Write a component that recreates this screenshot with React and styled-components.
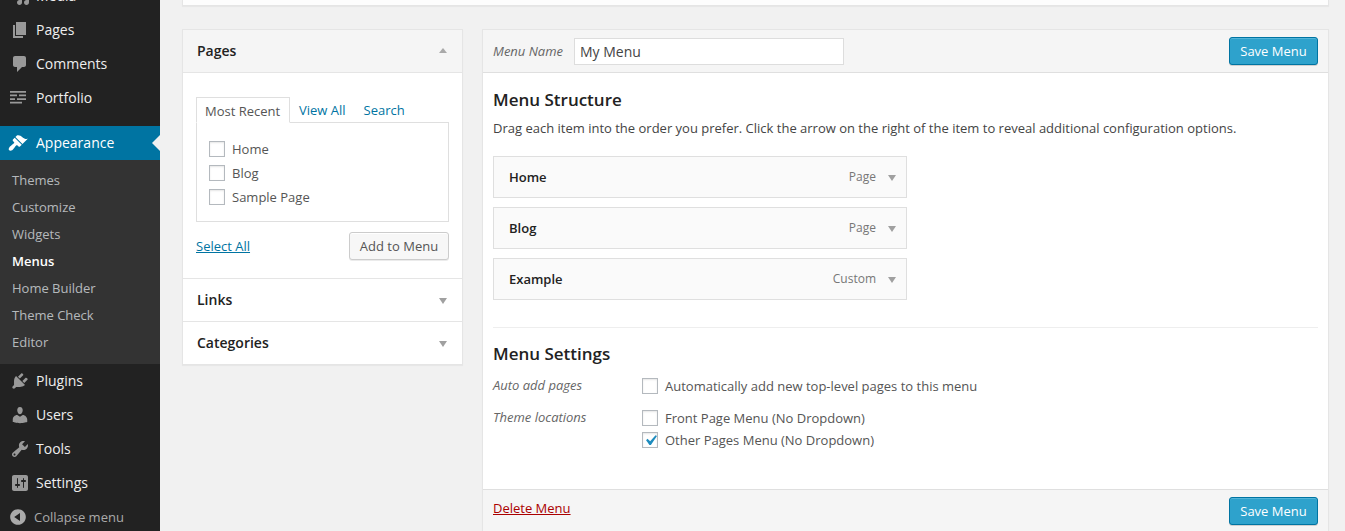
import React from "react";
import styled, { createGlobalStyle } from "styled-components";

const Global = createGlobalStyle`
  html, body { margin: 0; padding: 0; background: #f1f1f1; overflow: hidden; }
  * { box-sizing: border-box; }
  body { font-family: "Open Sans", "Liberation Sans", sans-serif; font-size: 13px; color: #444; }
`;

const Page = styled.div`
  display: flex;
  width: 1345px;
  height: 531px;
  overflow: hidden;
  background: #f1f1f1;
`;

const Sidebar = styled.nav`
  flex: 0 0 160px;
  background: #222;
  margin-top: -21px;
  height: 552px;
`;

const NavItem = styled.div`
  position: relative;
  display: flex;
  align-items: center;
  height: 34px;
  padding: 0 0 2px 10px;
  font-size: 14px;
  color: ${(p) => (p.$active ? "#fff" : "#eee")};
  background: ${(p) => (p.$active ? "#0074a2" : "transparent")};
  margin-top: ${(p) => (p.$gap ? "11px" : "0")};
  svg {
    flex: 0 0 20px;
    fill: ${(p) => (p.$active ? "#fff" : "#999")};
    margin: 2px 6px 0 ${(p) => (p.$active ? "-2px" : "0")};
  }
  ${(p) => p.$active && "span { margin-left: 2px; }"}
  ${(p) =>
    p.$active &&
    `&::after {
      content: "";
      position: absolute;
      right: 0;
      top: 9px;
      border: 8px solid transparent;
      border-right-color: #f1f1f1;
      border-left-width: 0;
    }`}
`;

const SubMenu = styled.div`
  background: #333;
  padding: 7px 0 8px;
`;

const SubItem = styled.div`
  height: 27px;
  line-height: 27px;
  padding-left: 12px;
  font-size: 13px;
  color: ${(p) => (p.$current ? "#fff" : "rgba(240,245,250,.7)")};
  font-weight: ${(p) => (p.$current ? 600 : 400)};
`;

const Collapse = styled.div`
  display: flex;
  align-items: center;
  height: 34px;
  padding-left: 8px;
  color: #aaa;
  font-size: 13px;
  svg { flex: 0 0 20px; fill: #aaa; margin-right: 6px; }
`;

const Main = styled.main`
  flex: 1;
  min-width: 0;
  padding: 0 16px 0 22px;
`;

const TopCard = styled.div`
  height: 6px;
  background: #fdfdfd;
  border: 1px solid #e5e5e5;
  border-top: 0;
  box-shadow: 0 1px 1px rgba(0, 0, 0, 0.04);
`;

const Columns = styled.div`
  display: flex;
  align-items: flex-start;
  gap: 19px;
  margin-top: 23px;
`;

const Accordion = styled.section`
  flex: 0 0 281px;
  background: #fff;
  border: 1px solid #e5e5e5;
  box-shadow: 0 1px 1px rgba(0, 0, 0, 0.04);
`;

const AccHeader = styled.h4`
  display: flex;
  align-items: center;
  justify-content: space-between;
  margin: 0;
  padding: 0 15px 2px 14px;
  font-size: 14px;
  font-weight: 600;
  color: #222;
  background: ${(p) => (p.$open ? "#f5f5f5" : "#fff")};
  border-bottom: ${(p) => (p.$last ? "0" : "1px solid #e5e5e5")};
  height: ${(p) => (p.$last ? "42px" : "43px")};
`;

const Arrow = styled.span`
  width: 0;
  height: 0;
  margin-top: ${(p) => p.$mt || 0}px;
  border-left: 4px solid transparent;
  border-right: 4px solid transparent;
  ${(p) =>
    p.$up
      ? "border-bottom: 5px solid #a9a9a9;"
      : "border-top: 6px solid #a0a0a0;"}
`;

const AccBody = styled.div`
  padding: 24px 13px 18px 13px;
  border-bottom: 1px solid #e5e5e5;
`;

const Tabs = styled.div`
  display: flex;
  height: 26px;
  position: relative;
  z-index: 1;
`;

const ActiveTab = styled.div`
  height: 26px;
  line-height: 26px;
  padding: 0 8px;
  width: 94px;
  color: #555;
  background: #fff;
  border: 1px solid #dfdfdf;
  border-bottom-color: #fff;
`;

const TabLink = styled.a`
  line-height: 27px;
  margin-left: ${(p) => p.$ml}px;
  color: #0074a2;
`;

const TabBox = styled.div`
  margin-top: -1px;
  height: 100px;
  padding: 14px 11px 0 12px;
  border: 1px solid #dfdfdf;
`;

const CheckRow = styled.label`
  display: flex;
  align-items: center;
  gap: 7px;
  height: ${(p) => p.$h || 24}px;
  color: #555;
`;

const Box = styled.span`
  position: relative;
  flex: 0 0 16px;
  width: 16px;
  height: 16px;
  background: #fff;
  border: 1px solid #b4b9be;
  box-shadow: inset 0 1px 2px rgba(0, 0, 0, 0.1);
  svg {
    position: absolute;
    left: -3px;
    top: -3px;
    width: 21px;
    height: 21px;
    fill: #1e8cbe;
  }
`;

const AccActions = styled.div`
  display: flex;
  align-items: center;
  justify-content: space-between;
  margin-top: 10px;
`;

const UnderLink = styled.a`
  color: ${(p) => p.$color || "#0074a2"};
  text-decoration: underline;
`;

const DeleteLink = styled(UnderLink)`
  margin-top: 2px;
`;

const SecondaryButton = styled.button`
  height: 28px;
  width: 100px;
  padding: 0;
  font: inherit;
  color: #555;
  background: #f7f7f7;
  border: 1px solid #ccc;
  border-radius: 3px;
  box-shadow: inset 0 1px 0 #fff, 0 1px 0 rgba(0, 0, 0, 0.08);
`;

const Editor = styled.section`
  flex: 1;
  min-width: 0;
  background: #fff;
  border: 1px solid #e5e5e5;
  box-shadow: 0 1px 1px rgba(0, 0, 0, 0.04);
`;

const EditorHeader = styled.div`
  display: flex;
  align-items: center;
  height: 43px;
  padding: 0 10px;
  background: #f5f5f5;
  border-bottom: 1px solid #dfdfdf;
`;

const NameLabel = styled.label`
  font-style: italic;
  font-size: 13px;
  color: #666;
  margin-right: 11px;
`;

const NameInput = styled.input`
  width: 270px;
  height: 27px;
  padding: 0 5px;
  font: inherit;
  font-size: 14px;
  color: #444;
  background: #fff;
  border: 1px solid #ddd;
  outline: none;
`;

const PrimaryButton = styled.button`
  margin-left: auto;
  width: 89px;
  height: 28px;
  padding: 0;
  font: inherit;
  color: #fff;
  background: #2ea2cc;
  border: 1px solid #0074a2;
  border-radius: 3px;
  box-shadow: inset 0 1px 0 rgba(120, 200, 230, 0.5), 0 1px 0 rgba(0, 0, 0, 0.15);
`;

const EditorBody = styled.div`
  padding: 15px 10px 38px;
`;

const Heading = styled.h3`
  margin: 0;
  font-size: 17px;
  line-height: 24px;
  font-weight: 600;
  color: #222;
`;

const Description = styled.p`
  margin: 7px 0 0;
  line-height: 18px;
  color: #444;
`;

const MenuList = styled.div`
  display: flex;
  flex-direction: column;
  gap: 9px;
  width: 414px;
  margin-top: 19px;
`;

const MenuItem = styled.div`
  display: flex;
  align-items: center;
  height: 42px;
  padding: 0 10px 0 15px;
  background: #fafafa;
  border: 1px solid #dfdfdf;
  b { flex: 1; font-weight: 600; color: #222; }
  span:first-of-type { font-size: 12px; color: #777; margin: 0 12px 2px 0; }
`;

const Divider = styled.hr`
  margin: 27px 0 14px;
  border: 0;
  border-top: 1px solid #eee;
`;

const SettingRow = styled.div`
  display: grid;
  grid-template-columns: 149px 1fr;
  margin-top: ${(p) => p.$mt}px;
  i { font-size: 13px; color: #666; line-height: 20px; }
`;

const Footer = styled.div`
  display: flex;
  align-items: flex-start;
  height: 60px;
  padding: 7px 10px 0;
  background: #f5f5f5;
  border-top: 1px solid #dfdfdf;
`;

const Icon = ({ children }) => (
  <svg width="20" height="20" viewBox="0 0 20 20">{children}</svg>
);

const icons = {
  Media: "M13 11V4c0-.55-.45-1-1-1h-1.67L9 1H5L3.67 3H2c-.55 0-1 .45-1 1v7c0 .55.45 1 1 1h10c.55 0 1-.45 1-1zM7 4.5c1.38 0 2.5 1.12 2.5 2.5S8.38 9.5 7 9.5 4.5 8.38 4.5 7 5.62 4.5 7 4.5zM14 6h5v10.5c0 1.38-1.12 2.5-2.5 2.5S14 17.88 14 16.5s1.12-2.5 2.5-2.5c.17 0 .34.02.5.05V9h-3V6zm-4 8.05V13h2v3.5c0 1.38-1.12 2.5-2.5 2.5S7 17.88 7 16.5 8.12 14 9.5 14c.17 0 .34.02.5.05z",
  Pages: "M6 15V2h10v13H6zm-1 1h8v2H3V5h2v11z",
  Comments: "M5 2h9c1.1 0 2 .9 2 2v7c0 1.1-.9 2-2 2h-2l-5 5v-5H5c-1.1 0-2-.9-2-2V4c0-1.1.9-2 2-2z",
  Portfolio: "M0 3h16v1.7H0zM0 6.6h7v1.7H0zM9 6.6h7v1.7H9zM0 10.2h5v1.7H0zM7 10.2h9v1.7H7zM0 13.8h12v1.7H0z",
  Appearance: "M14.48 11.06L7.41 3.99l1.5-1.5c.5-.56 2.3-.47 3.51.32 1.21.8 1.43 1.28 2.91 2.1 1.18.64 2.45 1.26 4.45.85zm-.71.71L6.7 4.7 4.93 6.47c-.39.39-.39 1.02 0 1.41l1.06 1.06c.39.39.39 1.03 0 1.42-.6.6-1.43 1.11-2.21 1.69-.35.26-.7.53-1.01.84C1.43 13.71 0 16.06 1.2 17.26c1.2 1.2 3.56-.23 4.36-1.57.31-.31.58-.66.85-1.02.57-.78 1.08-1.61 1.69-2.21.39-.39 1.02-.39 1.41 0l1.06 1.06c.39.39 1.02.39 1.41 0z",
  Plugins: "M13.11 4.36L9.87 7.6 8 5.73l3.24-3.24c.35-.34 1.05-.2 1.56.32.52.51.66 1.21.31 1.55zm-8 1.77l.91-1.12 9.01 9.01-1.19.84c-.71.71-2.63 1.16-3.82 1.16H6.14L4.9 17.26c-.59.59-1.54.59-2.12 0-.59-.58-.59-1.53 0-2.12l1.24-1.24v-3.88c0-1.13.4-3.19 1.09-3.89zm7.26 3.97l3.24-3.24c.34-.35 1.04-.21 1.55.31.52.51.66 1.21.31 1.55l-3.24 3.25z",
  Users: "M10 9.25c-2.27 0-2.73-3.44-2.73-3.44C7 4.02 7.82 2 9.97 2c2.16 0 2.98 2.02 2.71 3.81 0 0-.41 3.44-2.68 3.44zm0 2.57L12.72 10c2.39 0 4.52 2.33 4.52 4.53v2.49s-3.65 1.13-7.24 1.13c-3.65 0-7.24-1.13-7.24-1.13v-2.49c0-2.25 1.94-4.48 4.47-4.48z",
  Tools: "M16.68 9.77c-1.34 1.34-3.3 1.67-4.95.99l-5.41 6.52c-.99.99-2.59.99-3.58 0s-.99-2.59 0-3.57l6.52-5.42c-.68-1.65-.35-3.61.99-4.95 1.28-1.28 3.12-1.62 4.72-1.06l-2.89 2.89 2.82 2.82 2.86-2.87c.53 1.58.18 3.39-1.08 4.65zM3.81 16.21c.4.39 1.04.39 1.43 0 .4-.4.4-1.04 0-1.43-.39-.4-1.03-.4-1.43 0-.39.39-.39 1.03 0 1.43z",
  Settings: "M18 16V4c0-1.1-.9-2-2-2H4c-1.1 0-2 .9-2 2v12c0 1.1.9 2 2 2h12c1.1 0 2-.9 2-2zM8 11h1c.55 0 1 .45 1 1s-.45 1-1 1H8v1.5c0 .28-.22.5-.5.5s-.5-.22-.5-.5V13H6c-.55 0-1-.45-1-1s.45-1 1-1h1V5.5c0-.28.22-.5.5-.5s.5.22.5.5V11zm5-2h-1c-.55 0-1-.45-1-1s.45-1 1-1h1V5.5c0-.28.22-.5.5-.5s.5.22.5.5V7h1c.55 0 1 .45 1 1s-.45 1-1 1h-1v5.5c0 .28-.22.5-.5.5s-.5-.22-.5-.5V9z",
};

const Nav = ({ name, ...rest }) => (
  <NavItem {...rest}>
    <Icon><path d={icons[name]} /></Icon>
    <span>{name}</span>
  </NavItem>
);

const Check = ({ checked }) => (
  <Box>
    {checked && (
      <svg viewBox="0 0 20 20"><path d="M14.83 4.89l1.34.94-5.81 8.38H9.02L5.78 9.67l1.34-1.25 2.57 2.4z" /></svg>
    )}
  </Box>
);

export default function App() {
  return (
    <Page>
      <Global />
      <Sidebar>
        <Nav name="Media" />
        <Nav name="Pages" />
        <Nav name="Comments" />
        <Nav name="Portfolio" />
        <Nav name="Appearance" $active $gap />
        <SubMenu>
          {["Themes", "Customize", "Widgets", "Menus", "Home Builder", "Theme Check", "Editor"].map((s) => (
            <SubItem key={s} $current={s === "Menus"}>{s}</SubItem>
          ))}
        </SubMenu>
        <Nav name="Plugins" />
        <Nav name="Users" />
        <Nav name="Tools" />
        <Nav name="Settings" />
        <Collapse>
          <Icon><path d="M10 2.16c4.33 0 7.84 3.51 7.84 7.84s-3.51 7.84-7.84 7.84S2.16 14.33 2.16 10 5.71 2.16 10 2.16zm2 11.72V6.12L6.18 9.97z" /></Icon>
          Collapse menu
        </Collapse>
      </Sidebar>
      <Main>
        <TopCard />
        <Columns>
          <Accordion>
            <AccHeader $open>Pages<Arrow $up /></AccHeader>
            <AccBody>
              <Tabs>
                <ActiveTab>Most Recent</ActiveTab>
                <TabLink $ml={9}>View All</TabLink>
                <TabLink $ml={18}>Search</TabLink>
              </Tabs>
              <TabBox>
                <CheckRow><Check />Home</CheckRow>
                <CheckRow><Check />Blog</CheckRow>
                <CheckRow><Check />Sample Page</CheckRow>
              </TabBox>
              <AccActions>
                <UnderLink>Select All</UnderLink>
                <SecondaryButton>Add to Menu</SecondaryButton>
              </AccActions>
            </AccBody>
            <AccHeader>Links<Arrow $mt={4} /></AccHeader>
            <AccHeader $last>Categories<Arrow $mt={4} /></AccHeader>
          </Accordion>
          <Editor>
            <EditorHeader>
              <NameLabel>Menu Name</NameLabel>
              <NameInput defaultValue="My Menu" />
              <PrimaryButton>Save Menu</PrimaryButton>
            </EditorHeader>
            <EditorBody>
              <Heading>Menu Structure</Heading>
              <Description>
                Drag each item into the order you prefer. Click the arrow on the right of the item to reveal additional configuration options.
              </Description>
              <MenuList>
                {[["Home", "Page"], ["Blog", "Page"], ["Example", "Custom"]].map(([t, k]) => (
                  <MenuItem key={t}>
                    <b>{t}</b>
                    <span>{k}</span>
                    <Arrow $mt={2} />
                  </MenuItem>
                ))}
              </MenuList>
              <Divider />
              <Heading>Menu Settings</Heading>
              <SettingRow $mt={9}>
                <i>Auto add pages</i>
                <CheckRow $h={22}><Check />Automatically add new top-level pages to this menu</CheckRow>
              </SettingRow>
              <SettingRow $mt={10}>
                <i>Theme locations</i>
                <div>
                  <CheckRow $h={22}><Check />Front Page Menu (No Dropdown)</CheckRow>
                  <CheckRow $h={22}><Check checked />Other Pages Menu (No Dropdown)</CheckRow>
                </div>
              </SettingRow>
            </EditorBody>
            <Footer>
              <DeleteLink $color="#a00">Delete Menu</DeleteLink>
              <PrimaryButton>Save Menu</PrimaryButton>
            </Footer>
          </Editor>
        </Columns>
      </Main>
    </Page>
  );
}
